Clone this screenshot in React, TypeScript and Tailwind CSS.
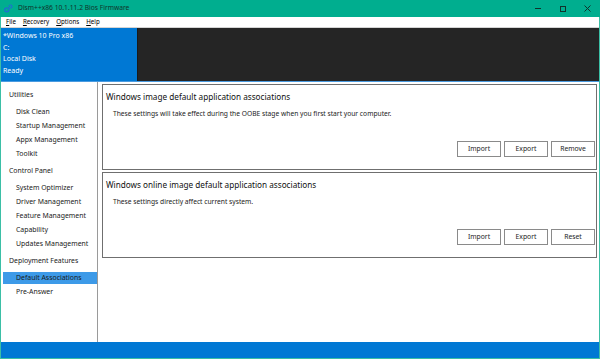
import React from "react";

const font = { fontFamily: '"Segoe UI", "Noto Sans", "Open Sans", sans-serif' };

function U({ c, rest }: { c: string; rest: string }) {
  return (
    <span>
      <span className="underline underline-offset-1">{c}</span>
      {rest}
    </span>
  );
}

function Btn({ label }: { label: string }) {
  return (
    <div className="w-[44px] h-[16px] border border-[#8a8a8a] bg-white flex items-center justify-center text-[6.8px] text-[#222]">
      {label}
    </div>
  );
}

function Panel({ title, desc, buttons }: { title: string; desc: string; buttons: string[] }) {
  return (
    <div className="h-[86px] border border-[#6f6f6f] bg-white flex flex-col pl-[3px] pr-[1px]">
      <div className="text-[8.2px] text-[#111] mt-[6px] leading-[12px]">{title}</div>
      <div className="text-[6.7px] text-[#222] ml-[7px] mt-[6px] leading-[10px]">{desc}</div>
      <div className="flex-1" />
      <div className="flex justify-end gap-[3px] mb-[12px]">
        {buttons.map((b) => (
          <Btn key={b} label={b} />
        ))}
      </div>
    </div>
  );
}

const sections: { head: string; items: string[] }[] = [
  { head: "Utilities", items: ["Disk Clean", "Startup Management", "Appx Management", "Toolkit"] },
  {
    head: "Control Panel",
    items: ["System Optimizer", "Driver Management", "Feature Management", "Capability", "Updates Management"],
  },
  { head: "Deployment Features", items: ["Default Associations", "Pre-Answer"] },
];

export default function App() {
  return (
    <div className="w-[600px] h-[359px] flex flex-col bg-white overflow-hidden" style={font}>
      {/* title bar */}
      <div className="h-[17px] bg-[#00ae8f] flex items-center text-[6.7px] text-[#10332c] shrink-0">
        <svg width="9" height="9" viewBox="0 0 10 10" className="ml-[4px] mr-[5px]">
          <circle cx="3" cy="6.5" r="2.3" fill="none" stroke="#1e6fd0" strokeWidth="1.4" />
          <circle cx="7.2" cy="2.8" r="1.7" fill="none" stroke="#1e6fd0" strokeWidth="1.2" />
        </svg>
        <span>Dism++x86 10.1.11.2 Bios Firmware</span>
        <div className="flex-1" />
        <div className="flex items-center">
          <div className="w-[25px] flex justify-center">
            <div className="w-[6px] h-[1px] bg-[#10332c]" />
          </div>
          <div className="w-[25px] flex justify-center">
            <div className="w-[6px] h-[6px] border border-[#10332c]" />
          </div>
          <div className="w-[25px] flex justify-center">
            <svg width="7" height="7" viewBox="0 0 7 7">
              <path d="M0.5 0.5L6.5 6.5M6.5 0.5L0.5 6.5" stroke="#10332c" strokeWidth="1" />
            </svg>
          </div>
        </div>
      </div>
      <div className="flex-1 flex flex-col border-x border-b border-[#3bbfa6] min-h-0">
        {/* menu */}
        <div className="h-[11px] bg-white border-b border-[#d4d4d4] flex items-center text-[6.2px] text-black gap-[7px] pl-[5px] shrink-0">
          <U c="F" rest="ile" />
          <U c="R" rest="ecovery" />
          <U c="O" rest="ptions" />
          <U c="H" rest="elp" />
        </div>
        {/* header */}
        <div className="h-[54px] flex shrink-0 border-b border-[#4a9be0]">
          <div className="w-[136px] bg-[#0078d4] text-white text-[7px] leading-[11.5px] pl-[2px] pt-[2px]">
            <div>*Windows 10 Pro x86</div>
            <div>C:</div>
            <div>Local Disk</div>
            <div>Ready</div>
          </div>
          <div className="w-[1px] bg-[#1a1a1a]" />
          <div className="flex-1 bg-[#252525]" />
        </div>
        {/* main */}
        <div className="flex-1 flex min-h-0">
          <div className="w-[97px] border-r border-[#9a9a9a] pt-[6px] text-[6.9px] text-[#1a1a1a] shrink-0">
            {sections.map((s) => (
              <div key={s.head} className="mb-[3px]">
                <div className="pl-[8px] h-[14px] leading-[14px] mb-[3px]">{s.head}</div>
                {s.items.map((it) =>
                  it === "Default Associations" ? (
                    <div key={it} className="h-[14px] py-[1px] pl-[2px]">
                      <div className="h-[12px] leading-[12px] bg-[#3d9ae8] pl-[13px]">{it}</div>
                    </div>
                  ) : (
                    <div key={it} className="h-[14px] leading-[14px] pl-[15px]">
                      {it}
                    </div>
                  )
                )}
              </div>
            ))}
          </div>
          <div className="flex-1 flex flex-col gap-[2px] pl-[4px] pr-[2px] pt-[2px]">
            <Panel
              title="Windows image default application associations"
              desc="These settings will take effect during the OOBE stage when you first start your computer."
              buttons={["Import", "Export", "Remove"]}
            />
            <Panel
              title="Windows online image default application associations"
              desc="These settings directly affect current system."
              buttons={["Import", "Export", "Reset"]}
            />
          </div>
        </div>
        {/* status */}
        <div className="h-[16px] bg-[#0078d4] shrink-0" />
      </div>
    </div>
  );
}
